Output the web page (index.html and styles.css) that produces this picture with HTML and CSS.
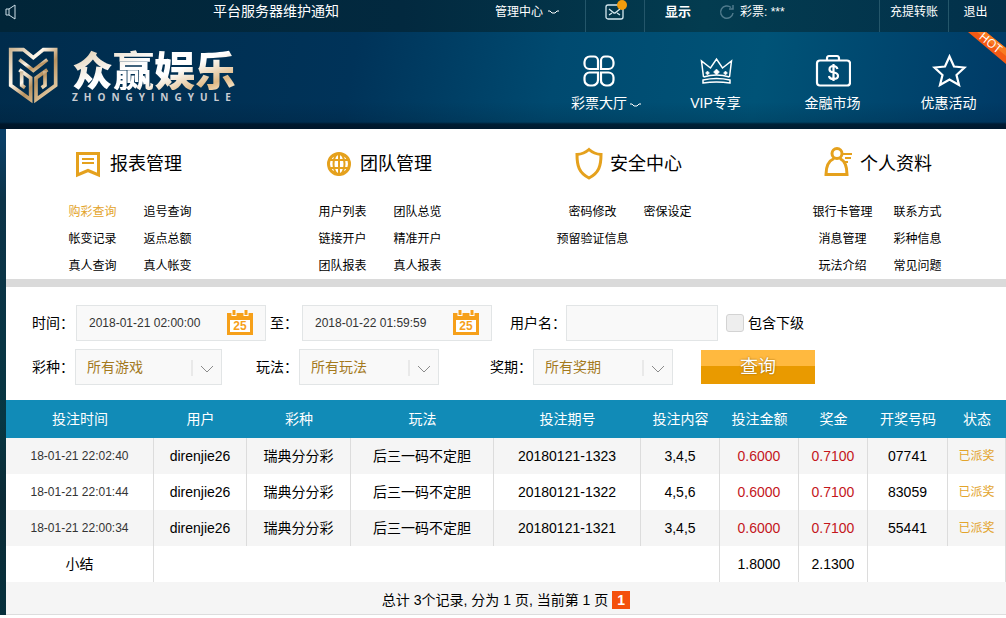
FILE: index.html
```html
<!DOCTYPE html>
<html lang="zh-CN">
<head>
<meta charset="utf-8">
<title>众赢娱乐</title>
<link rel="stylesheet" href="styles.css">
</head>
<body>
<div class="page">
  <div class="topbar">
    <svg class="speaker" viewBox="0 0 12 16"><path d="M1 5h3v6H1zM4 5l6-4v14l-6-4"/></svg>
    <span class="notice">平台服务器维护通知</span>
    <a class="manage" href="#">管理中心 <svg class="wave" viewBox="0 0 13 6"><path d="M1 2h2l2 2h3l2-2h2"/></svg></a>
    <a class="mail" href="#" aria-label="消息">
      <svg viewBox="0 0 28 24"><rect x="2" y="6" width="17" height="14" rx="2"/><path d="M5 10l5 4h1l5-4M5 16l3-2M16 16l-3-2"/><circle cx="18" cy="6" r="5"/></svg>
    </a>
    <div class="balance">
      <button class="show" type="button">显示</button>
      <svg class="refresh" viewBox="0 0 16 16"><path d="M14 9a6.200 6.200 0 1 1-2-5.500M14 1v4h-4"/></svg>
      <span>彩票: ***</span>
    </div>
    <a class="transfer" href="#">充提转账</a>
    <a class="logout" href="#">退出</a>
  </div>
  <header class="header">
    <a class="logo" href="#">
      <svg viewBox="12 12 156 174">
        <defs><linearGradient id="gold" x1="0" y1="0" x2="1" y2="1"><stop offset="0" stop-color="#cdb694"/><stop offset=".35" stop-color="#fff8ec"/><stop offset=".6" stop-color="#b9925f"/><stop offset="1" stop-color="#f3dfbc"/></linearGradient></defs>
        <g stroke="url(#gold)" stroke-width="11">
          <path d="M46 83l34 25v65L20 130V23h38l30 24 30-24h37v107l-59 43v-65l34-25"/>
          <path d="M46 53l42 32 42-32"/>
          <path d="M53 88v42l10 7M123 88v42l-10 7"/>
        </g>
      </svg>
      <span class="brand"><b>众赢娱乐</b><small>ZHONGYINGYULE</small></span>
    </a>
    <nav class="nav">
      <a href="#">
        <svg viewBox="0 0 36 36"><path class="thick" d="M9 3.500h4a4 4 0 0 1 4 4V16H8.500A5 5 0 0 1 3.500 11V9A5.500 5.500 0 0 1 9 3.500zM24 3.500h3A5.500 5.500 0 0 1 32.500 9v2a5 5 0 0 1-5 5H20V7.500a4 4 0 0 1 4-4zM8.500 19.500H17V27a5.500 5.500 0 0 1-5.500 5.500H9A5.500 5.500 0 0 1 3.500 27v-2.500a5 5 0 0 1 5-5zM20 19.500h7.500a5 5 0 0 1 5 5V27a5.500 5.500 0 0 1-5.500 5.500h-2A5 5 0 0 1 20 27z"/></svg>
        <span class="hall">彩票大厅<svg class="wave" viewBox="0 0 13 6"><path d="M1 2h2l2 2h3l2-2h2"/></svg></span>
      </a>
      <a href="#">
        <svg viewBox="0 0 36 36"><path d="M5.500 24L3.500 8l9 7 6-9 6 9 9-7-2 16M5.500 24q13-4 26 0M5 27q13.500-3 27 0v3q-13.500-2-27 0z"/><path class="gem" d="M18.500 16l3 3-3 3-3-3zM9.500 18l2 2-2 2-2-2zM27.500 18l2 2-2 2-2-2z"/></svg>
        <span>VIP专享</span>
      </a>
      <a href="#">
        <svg viewBox="0 0 36 36"><rect class="thick" x="2" y="7.500" width="33" height="25" rx="3"/><path class="thick" d="M12 7V5.500Q12 3 14 3h8q2 0 2 2.500V7M22.500 16q-1-3-4-3-4 0-4 3.500 0 2.500 4 3 4.500.5 4.500 3.500 0 3-4.500 3-4 0-4.500-3M18.500 11v17"/></svg>
        <span>金融市场</span>
      </a>
      <a href="#">
        <svg viewBox="0 0 36 36"><path class="thick" d="M18.500 3.500l4.500 10 10.500 1-8 7.500 2.500 10-9.500-5.500L9 32l2.500-10-8-7.500 10.500-1z"/></svg>
        <span>优惠活动</span>
      </a>
    </nav>
    <svg class="hot" viewBox="0 0 40 34"><path d="M2 0h18l20 16v16z" fill="#f45a14"/><path d="M11 0h9l20 16v8z" fill="#f87b22"/><text x="22" y="14" transform="rotate(39 22 14)">HOT</text></svg>
  </header>

  <main class="main">
    <div class="menu">
      <section>
        <h2><svg viewBox="0 0 36 36"><path class="line3" d="M7.500 7.500h21v21.500l-10.500-4.500-10.500 4.500z"/><path class="line2" d="M12 13h12M12 17h12"/></svg>报表管理</h2>
        <div class="links"><a class="active" href="#">购彩查询</a><a href="#">追号查询</a><a href="#">帐变记录</a><a href="#">返点总额</a><a href="#">真人查询</a><a href="#">真人帐变</a></div>
      </section>
      <section>
        <h2><svg viewBox="0 0 36 36"><circle class="line3" cx="19" cy="18" r="10.500"/><path class="line2" d="M19 7v22M9 14h20M9 22h20"/><ellipse class="line2" cx="19" cy="18" rx="5.500" ry="10.500"/></svg>团队管理</h2>
        <div class="links"><a href="#">用户列表</a><a href="#">团队总览</a><a href="#">链接开户</a><a href="#">精准开户</a><a href="#">团队报表</a><a href="#">真人报表</a></div>
      </section>
      <section>
        <h2><svg viewBox="0 0 36 36"><path class="line3" d="M19 3.500Q24 8 31 8.500C31 20 29 27 19 32 9 27 7 20 7 8.500Q14 8 19 3.500z"/></svg>安全中心</h2>
        <div class="links"><a href="#">密码修改</a><a href="#">密保设定</a><a href="#">预留验证信息</a></div>
      </section>
      <section>
        <h2><svg viewBox="0 0 36 36"><circle class="line3" cx="17" cy="7.500" r="5"/><path class="line3" d="M14 12.500Q6 16 6 28.500h21q0-12.500-7-16"/><path class="line2" d="M23 8h9M25 12h6M25 16h3"/></svg>个人资料</h2>
        <div class="links"><a href="#">银行卡管理</a><a href="#">联系方式</a><a href="#">消息管理</a><a href="#">彩种信息</a><a href="#">玩法介绍</a><a href="#">常见问题</a></div>
      </section>
    </div>

    <form class="filters">
      <div class="row">
        <label for="from">时间：</label>
        <div class="date">
          <input id="from" type="text" value="2018-01-21 02:00:00">
          <button type="button" aria-label="选择日期"><svg viewBox="0 0 26 26"><path d="M0 3h26v22H0z" fill="#f6a01a"/><path d="M3 10h20v12H3z" fill="#fff"/><path d="M4.500 0h5v6h-5zM16.500 0h5v6h-5z" fill="#fff"/><path d="M7 0v5M19 0v5" stroke="#f6a01a" stroke-width="3"/><text x="13" y="20">25</text></svg></button>
        </div>
        <label for="to" class="to">至：</label>
        <div class="date">
          <input id="to" type="text" value="2018-01-22 01:59:59">
          <button type="button" aria-label="选择日期"><svg viewBox="0 0 26 26"><path d="M0 3h26v22H0z" fill="#f6a01a"/><path d="M3 10h20v12H3z" fill="#fff"/><path d="M4.500 0h5v6h-5zM16.500 0h5v6h-5z" fill="#fff"/><path d="M7 0v5M19 0v5" stroke="#f6a01a" stroke-width="3"/><text x="13" y="20">25</text></svg></button>
        </div>
        <label for="user" class="user-label">用户名：</label>
        <input id="user" class="user" type="text">
        <input id="sub" class="check" type="checkbox">
        <label for="sub" class="sub-label">包含下级</label>
      </div>
      <div class="row">
        <label for="game">彩种：</label>
        <div class="select game"><select id="game"><option>所有游戏</option></select><svg viewBox="0 0 30 24"><path class="bar" d="M1 3v16"/><path d="M10 9l6 6 6-6"/></svg></div>
        <label for="play" class="play-label">玩法：</label>
        <div class="select"><select id="play"><option>所有玩法</option></select><svg viewBox="0 0 30 24"><path class="bar" d="M1 3v16"/><path d="M10 9l6 6 6-6"/></svg></div>
        <label for="issue" class="issue-label">奖期：</label>
        <div class="select"><select id="issue"><option>所有奖期</option></select><svg viewBox="0 0 30 24"><path class="bar" d="M1 3v16"/><path d="M10 9l6 6 6-6"/></svg></div>
        <button class="search" type="submit">查询</button>
      </div>
    </form>

    <table class="bets">
      <colgroup><col class="c-time"><col class="c-user"><col class="c-game"><col class="c-play"><col class="c-issue"><col class="c-amount"><col class="c-amount"><col class="c-prize"><col class="c-code"><col class="c-state"></colgroup>
      <thead><tr><th>投注时间</th><th>用户</th><th>彩种</th><th>玩法</th><th>投注期号</th><th>投注内容</th><th>投注金额</th><th>奖金</th><th>开奖号码</th><th>状态</th></tr></thead>
      <tbody>
        <tr><td class="time">18-01-21 22:02:40</td><td>direnjie26</td><td>瑞典分分彩</td><td>后三一码不定胆</td><td>20180121-1323</td><td>3,4,5</td><td class="money">0.6000</td><td class="money">0.7100</td><td>07741</td><td class="state">已派奖</td></tr>
        <tr><td class="time">18-01-21 22:01:44</td><td>direnjie26</td><td>瑞典分分彩</td><td>后三一码不定胆</td><td>20180121-1322</td><td>4,5,6</td><td class="money">0.6000</td><td class="money">0.7100</td><td>83059</td><td class="state">已派奖</td></tr>
        <tr><td class="time">18-01-21 22:00:34</td><td>direnjie26</td><td>瑞典分分彩</td><td>后三一码不定胆</td><td>20180121-1321</td><td>3,4,5</td><td class="money">0.6000</td><td class="money">0.7100</td><td>55441</td><td class="state">已派奖</td></tr>
        <tr><td>小结</td><td colspan="5"></td><td>1.8000</td><td>2.1300</td><td colspan="2"></td></tr>
      </tbody>
    </table>
    <div class="pager">总计 3个记录, 分为 1 页, 当前第 1 页 <b>1</b></div>
  </main>
</div>
</body>
</html>
```
FILE: styles.css
```css
* { box-sizing: border-box; }
body {
  margin: 0;
  background: #fff;
  color: #000;
  font: 14px/20px "Liberation Sans", "Noto Sans CJK SC", sans-serif;
}
a { color: inherit; text-decoration: none; }
button, input, select { font: inherit; color: inherit; margin: 0; }
button { padding: 0; border: 0; background: none; }
svg { display: block; fill: none; flex: none; }

.page { background: linear-gradient(#0a3e66 0, #0a3e66 140px, #0c3348 200px, #073642 420px, #0b2a36 500px, #06303c 100%); }

.topbar {
  display: flex;
  height: 32px;
  padding-left: 5px;
  color: #fff;
  font-size: 12px;
  line-height: 24px;
  background: linear-gradient(90deg, #012538, #02293f 40%, #033c50 70%, #02304a);
}
.speaker { width: 12px; height: 16px; margin-top: 4px; stroke: #cfe0e8; }
.notice { flex: 1; margin-left: 40px; text-align: center; font-size: 14px; line-height: 22px; }
.manage { display: flex; align-items: center; gap: 4px; width: 90px; height: 24px; }
.wave { width: 13px; height: 6px; stroke: #fff; }
.mail { width: 60px; border: solid #24566a; border-width: 0 1px; padding-left: 18px; }
.mail svg { width: 28px; height: 24px; margin-top: -1px; stroke: #d5e8ef; stroke-width: 1.3; }
.mail circle { fill: #f39c0c; stroke: none; }
.balance { display: flex; width: 234px; padding-left: 20px; }
.show { align-self: flex-start; width: 54px; text-align: left; font-size: 13px; font-weight: bold; line-height: 24px; }
.refresh { width: 16px; height: 16px; margin: 4px 5px 0 0; stroke: #4f7a8c; stroke-width: 1.5; }
.transfer { width: 70px; border: solid #24566a; border-width: 0 1px; text-align: center; }
.logout { width: 57px; padding-right: 4px; text-align: center; }

.header {
  position: relative;
  display: flex;
  justify-content: space-between;
  height: 97px;
  color: #fff;
  background:
    linear-gradient(transparent 0, transparent 70px, rgba(0, 15, 30, .15) 90px, rgba(0, 15, 30, .7) 92px, rgba(0, 15, 30, .8) 100%),
    linear-gradient(100deg, #002c4c, #003359 35%, #004a70 55%, #005377 75%, #003a66);
}
.logo { display: flex; gap: 12px; padding: 14px 0 0 8px; }
.logo svg { width: 52px; height: 58px; }
.brand { display: flex; flex-direction: column; }
.brand b {
  font: 900 41px/44px "Noto Sans CJK SC", sans-serif;
  color: transparent;
  background: linear-gradient(160deg, #dcc6a4, #fff 40%, #fff 60%, #dfb884 85%, #fff3de);
  background-clip: text;
  -webkit-background-clip: text;
}
.brand small { padding-top: 1px; font: bold 10px/12px "Open Sans", sans-serif; letter-spacing: 6px; color: #c9ccd2; }
.nav { display: grid; grid-template-columns: 116px 117px 117px 115px; }
.nav a { display: flex; flex-direction: column; align-items: center; gap: 4px; padding-top: 21px; }
.nav a > svg { width: 36px; height: 36px; stroke: #fff; stroke-width: 1.5; }
.nav .thick { stroke-width: 2.2; }
.nav .gem { fill: #fff; stroke-width: 0.5; }
.hall { position: relative; }
.hall .wave { position: absolute; left: 100%; top: 9px; margin-left: 2px; }
.hot { position: absolute; top: 0; right: 0; width: 40px; height: 34px; }
.hot text { fill: #fff; font-size: 12px; font-family: "Open Sans", sans-serif; text-anchor: middle; }

.main { margin-left: 6px; background: #fff; border-bottom: 1px solid #ddd; }
.menu {
  display: grid;
  grid-template-columns: repeat(4, 1fr);
  height: 158px;
  padding-top: 17px;
  border-bottom: 8px solid #dadada;
}
.menu section { display: flex; flex-direction: column; align-items: center; padding-right: 2px; }
.menu h2 { display: flex; align-items: center; gap: 4px; margin: 0; padding-right: 8px; font-size: 18px; font-weight: normal; line-height: 36px; }
.menu h2 svg { width: 36px; height: 36px; stroke: #e5a11d; }
.line3 { stroke-width: 3; }
.line2 { stroke-width: 2; }
.links { display: grid; grid-template-columns: 75px 75px; margin-top: 17px; font-size: 12px; line-height: 27px; text-align: center; }
.links .active { color: #e3a42c; }

.filters { display: flex; flex-direction: column; gap: 8px; padding: 18px 0 15px 26px; }
.row { display: flex; align-items: center; }
.row label { white-space: nowrap; line-height: 36px; }
.date, .select { position: relative; display: flex; height: 36px; background: #f9f9f9; border: 1px solid #e2e5e6; }
.date { width: 190px; align-items: center; margin-left: 2px; }
.date input { width: 150px; height: 34px; padding: 0 0 0 12px; border: 0; background: none; font-size: 12px; color: #333; }
.date svg { width: 26px; height: 26px; }
.date text { fill: #f6a01a; font-size: 12px; font-weight: bold; text-anchor: middle; }
.row .to { margin: 0 2px 0 4px; }
.row .user-label { margin-left: 18px; }
.user { width: 152px; height: 36px; background: #f9f9f9; border: 1px solid #e2e5e6; }
.check { appearance: none; width: 18px; height: 18px; margin: 0 4px 0 8px; border: 1px solid #d3d3d3; border-radius: 3px; background: #eee; }
.select { width: 140px; margin-left: 1px; }
.game { width: 147px; }
.select select { appearance: none; width: 100%; padding: 0 0 0 11px; border: 0; background: none; color: #a47a1e; }
.select svg { position: absolute; right: 0; top: 7px; width: 30px; height: 24px; stroke: #8b8b8b; pointer-events: none; }
.select .bar { stroke: #d9d9d9; }
.row .play-label { margin-left: 34px; }
.row .issue-label { margin-left: 51px; }
.search {
  width: 114px;
  height: 34px;
  margin-left: 28px;
  color: #fff;
  font-size: 18px;
  line-height: 32px;
  text-shadow: 0 0 2px #8a5a00;
  background: linear-gradient(#ffb93f 0, #ffb93f 48%, #e99a00 48%, #e99a00 100%);
}

.bets { width: 100%; table-layout: fixed; border-collapse: separate; border-spacing: 0; text-align: center; }
.bets th { height: 38px; padding: 0; color: #fff; font-weight: normal; background: #118bb7; }
.bets td { height: 36px; padding: 0; border-right: 1px solid #dcdcdc; }
.bets tbody tr:nth-child(odd) { background: #f5f5f5; }
.c-time { width: 148px; }
.c-user { width: 93px; }
.c-game { width: 104px; }
.c-play { width: 143px; }
.c-issue { width: 147px; }
.c-amount { width: 79px; }
.c-prize { width: 69px; }
.c-code { width: 80px; }
.c-state { width: 58px; }
.bets .time { font-size: 12px; color: #333; }
.bets .money { color: #c4161c; }
.bets .state { font-size: 12px; color: #e3a42c; }
.pager { height: 32px; line-height: 36px; text-align: center; background: #f5f5f5; }
.pager b { display: inline-block; width: 18px; line-height: 18px; color: #fff; background: #f4500c; }
```
